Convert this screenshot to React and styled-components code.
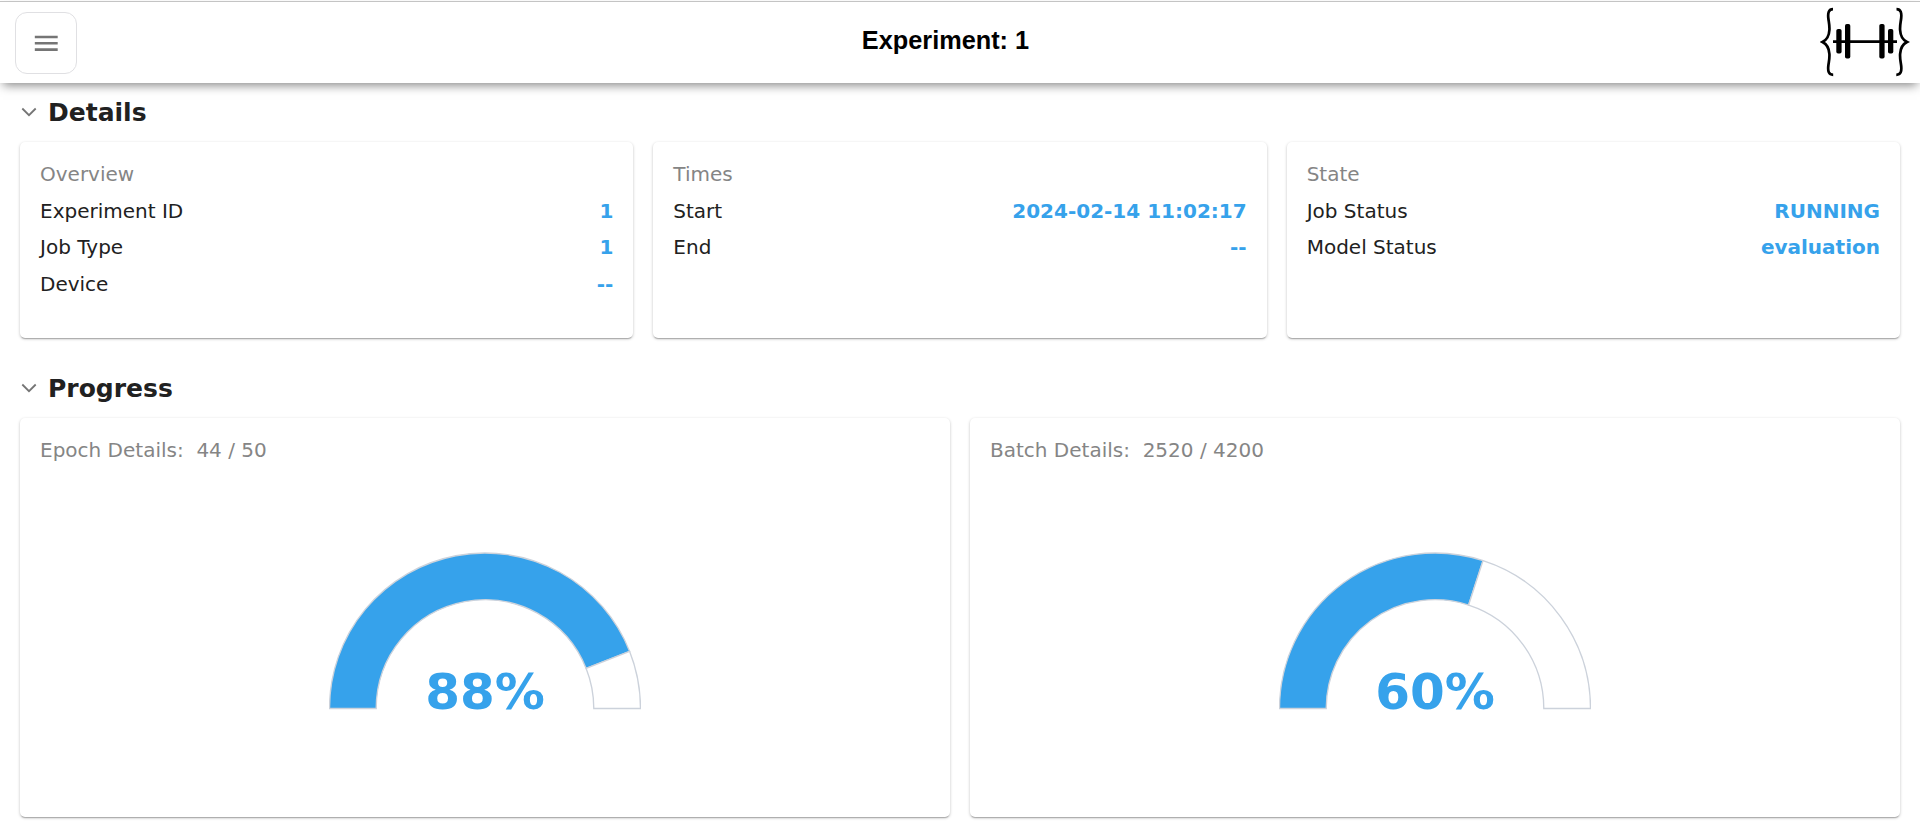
import React from "react";
import styled, { createGlobalStyle } from "styled-components";

const BLUE = "#36a2eb";

const GlobalStyle = createGlobalStyle`
  * { box-sizing: border-box; }
  body {
    margin: 0;
    background: #fff;
    color: #212121;
    font-family: "DejaVu Sans", sans-serif;
    font-size: 20px;
  }
`;

const Page = styled.div`
  height: 833px;
  overflow: hidden;
  padding-top: 1px;
`;

const Header = styled.header`
  display: grid;
  grid-template-columns: 62px 1fr 90px;
  align-items: center;
  height: 82px;
  padding: 0 10px 0 15px;
  border-top: 1px solid #c4c4c4;
  box-shadow: 0 5px 10px -3px rgba(0, 0, 0, 0.5);
`;

const MenuButton = styled.button`
  display: flex;
  align-items: center;
  justify-content: center;
  width: 62px;
  height: 62px;
  margin: 1px 0 0;
  padding: 0;
  border: 1px solid #e0e0e3;
  border-radius: 12px;
  background: #fff;
`;

const PageTitle = styled.h1`
  margin: 0 6px 5px 0;
  text-align: center;
  color: #000;
  font: bold 25.3px/30px "Liberation Sans", Arial, sans-serif;
`;

const Main = styled.main`
  padding: 10px 20px 0;
`;

const Section = styled.section`
  margin-bottom: 31px;
`;

const SectionHeader = styled.div`
  display: flex;
  align-items: center;
  gap: 10px;
  height: 38px;
  margin-bottom: 11px;
`;

const SectionTitle = styled.h2`
  margin: 0;
  padding-top: 2px;
  font-size: 25px;
  line-height: 38px;
  font-weight: 700;
`;

const CardGrid = styled.div`
  display: grid;
  grid-template-columns: repeat(${(p) => p.$columns}, 1fr);
  gap: 20px;
`;

const Card = styled.article`
  display: flex;
  flex-direction: column;
  height: ${(p) => p.$height}px;
  padding: 14px 20px;
  border-radius: 5px;
  background: #fff;
  box-shadow: 0 1px 3px rgba(0, 0, 0, 0.25), 0 2px 1px -1px rgba(0, 0, 0, 0.2);
`;

const CardTitle = styled.div`
  color: #858585;
  line-height: 36.5px;
  white-space: pre;
`;

const Row = styled.div`
  display: flex;
  justify-content: space-between;
  line-height: 36.5px;
`;

const Value = styled.span`
  color: ${BLUE};
  font-weight: 700;
`;

const GaugeWrap = styled.div`
  display: grid;
  justify-items: center;
  margin-top: 83px;
  & > * { grid-area: 1 / 1; }
`;

const Percent = styled.div`
  align-self: end;
  color: ${BLUE};
  font-size: 50px;
  line-height: 56px;
  font-weight: 700;
  margin-bottom: -10px;
`;

const MenuIcon = () => (
  <svg width="30.5" height="30.5" viewBox="0 0 24 24" fill="#757575">
    <path d="M3 18h18v-2H3v2zm0-5h18v-2H3v2zm0-7v2h18V6H3z" />
  </svg>
);

const Chevron = () => (
  <svg width="18" height="18" viewBox="0 0 18 18" fill="none" stroke="#757575" strokeWidth="1.8">
    <path d="M2.3 5.5L9 12.2l6.7-6.7" />
  </svg>
);

const Logo = () => (
  <svg width="90" height="73" viewBox="0 0 90 73">
    <g fill="none" stroke="#000" strokeWidth="2.7">
      <path d="M13 3.200C8.500 3.200 7.800 7 8.300 12C8.800 16.500 9.700 19 9.400 24C9.100 30 6.500 34 2.500 36C6.500 38 9.100 42 9.400 48C9.700 53 8.800 55.500 8.300 60C7.800 65 8.500 68.800 13.200 68.800" />
      <path d="M76.500 3.200C81 3.200 81.700 7 81.200 12C80.700 16.500 79.800 19 80.100 24C80.400 30 83 34 87 36C83 38 80.400 42 80.100 48C79.800 53 80.700 55.500 81.200 60C81.700 65 81 68.800 76.300 68.800" />
      <path d="M13 35.600H77" strokeWidth="2.8" />
    </g>
    <rect x="16.300" y="23" width="5.300" height="24.500" rx="1.8" />
    <rect x="25" y="18" width="5.300" height="34.500" rx="1.8" />
    <rect x="59.300" y="18" width="5.300" height="34.500" rx="1.8" />
    <rect x="68" y="23" width="5.300" height="24.500" rx="1.8" />
  </svg>
);

const CX = 156;
const CY = 156.5;
const OUTER = 155.5;
const INNER = 108.8;

const point = (r, t) => {
  const a = Math.PI * (1 - t);
  return `${CX + r * Math.cos(a)} ${CY - r * Math.sin(a)}`;
};

const sector = (from, to) =>
  `M${point(OUTER, from)}A${OUTER} ${OUTER} 0 0 1 ${point(OUTER, to)}` +
  `L${point(INNER, to)}A${INNER} ${INNER} 0 0 0 ${point(INNER, from)}Z`;

function Gauge({ done, total }) {
  const ratio = done / total;
  return (
    <GaugeWrap>
      <svg width="312" height="158" viewBox="0 0 312 158" stroke="#ccd2db" strokeWidth="1.35">
        <path d={sector(0, ratio)} fill={BLUE} />
        <path d={sector(ratio, 1)} fill="#fff" />
      </svg>
      <Percent>{Math.round(ratio * 100)}%</Percent>
    </GaugeWrap>
  );
}

const details = [
  { title: "Overview", rows: [["Experiment ID", "1"], ["Job Type", "1"], ["Device", "--"]] },
  { title: "Times", rows: [["Start", "2024-02-14 11:02:17"], ["End", "--"]] },
  { title: "State", rows: [["Job Status", "RUNNING"], ["Model Status", "evaluation"]] },
];

const progress = [
  { label: "Epoch Details:", done: 44, total: 50 },
  { label: "Batch Details:", done: 2520, total: 4200 },
];

export default function App() {
  return (
    <Page>
      <GlobalStyle />
      <Header>
        <MenuButton aria-label="Menu">
          <MenuIcon />
        </MenuButton>
        <PageTitle>Experiment: 1</PageTitle>
        <Logo />
      </Header>
      <Main>
        <Section>
          <SectionHeader>
            <Chevron />
            <SectionTitle>Details</SectionTitle>
          </SectionHeader>
          <CardGrid $columns={3}>
            {details.map((card) => (
              <Card key={card.title} $height={196}>
                <CardTitle>{card.title}</CardTitle>
                {card.rows.map(([name, value]) => (
                  <Row key={name}>
                    <span>{name}</span>
                    <Value>{value}</Value>
                  </Row>
                ))}
              </Card>
            ))}
          </CardGrid>
        </Section>
        <Section>
          <SectionHeader>
            <Chevron />
            <SectionTitle>Progress</SectionTitle>
          </SectionHeader>
          <CardGrid $columns={2}>
            {progress.map(({ label, done, total }) => (
              <Card key={label} $height={399}>
                <CardTitle>{`${label}  ${done} / ${total}`}</CardTitle>
                <Gauge done={done} total={total} />
              </Card>
            ))}
          </CardGrid>
        </Section>
      </Main>
    </Page>
  );
}
